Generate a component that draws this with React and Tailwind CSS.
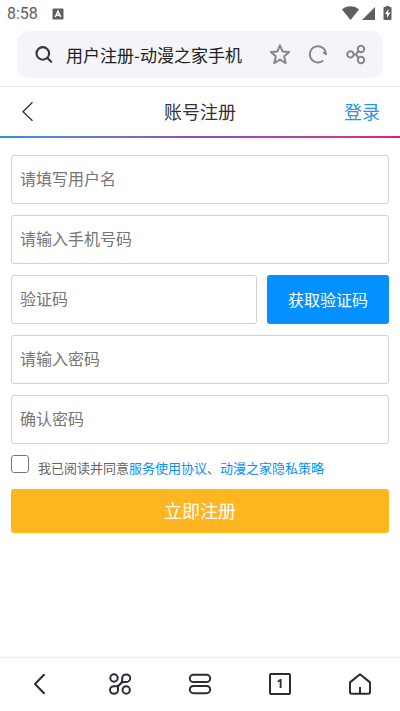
/*
DESCRIPTION: Mobile browser view with the account registration page.
- Status bar and address bar on top
- Registration form in the middle
- Browser toolbar at the bottom
*/

import { useState } from 'react'

const FIELD_CLASS =
  'block h-[49px] w-full min-w-0 rounded-[3px] border border-[#d2d2d2] bg-white px-2 pb-1 text-base text-[#333] outline-none placeholder:text-[#757575]'

function StatusBar() {
  return (
    <div className="flex h-7 items-center justify-between pr-2 pl-[7px] text-[#5f5f5f]">
      <div className="flex items-center gap-[14px]">
        <span className="font-[Roboto,sans-serif] text-base leading-7">8:58</span>
        <svg className="h-3 w-3" viewBox="0 0 12 12">
          <rect x="0.5" y="0.5" width="11" height="11" rx="1" fill="#5f5f5f" />
          <path d="M3.3 9 6 3.2 8.7 9M4.3 7.2h3.4" fill="none" stroke="#fff" strokeWidth="1.4" />
        </svg>
      </div>
      <svg className="h-4 w-[50px]" viewBox="0 0 50 16" fill="currentColor">
        <path d="M0 3.4C4.8-.7 12.2-.7 17 3.4L8.5 14Z" />
        <path d="M33 1v13H20Z" />
        <path d="M43.8 1V-.4h3.4V1h1.3q1 0 1 1v11q0 1-1 1h-6q-1 0-1-1V2q0-1 1-1Z" />
        <path d="m46.4 3-3.4 5h2.1v4l3.1-5.2h-2Z" fill="#fff" />
      </svg>
    </div>
  )
}

function AddressBar() {
  return (
    <div className="border-b border-[#ebebeb] px-[17px] pt-[3px] pb-2">
      <div className="flex h-[47px] items-center rounded-xl bg-[#f3f5f8] pr-4 pl-[18px]">
        <svg className="h-[18px] w-[18px] shrink-0" viewBox="0 0 18 18" fill="none" stroke="#34363b" strokeWidth="2.1">
          <circle cx="7.8" cy="7.4" r="6.3" />
          <path d="m12.4 12 3.8 3.8" strokeLinecap="round" />
        </svg>
        <span className="ml-[13px] flex-1 truncate text-[17px] text-[#202124]">用户注册-动漫之家手机</span>
        <div className="flex shrink-0 gap-4 text-[#82868e]">
          <button type="button" aria-label="收藏">
            <svg className="h-[22px] w-[22px]" viewBox="0 0 22 22" fill="none" stroke="currentColor" strokeWidth="2" strokeLinejoin="round">
              <path d="m11 1.4 2.6 6 6.5.6-4.9 4.3 1.5 6.8-5.7-3.6-5.7 3.6 1.5-6.8L1.9 8l6.5-.6Z" />
            </svg>
          </button>
          <button type="button" aria-label="刷新">
            <svg className="h-[22px] w-[22px]" viewBox="0 0 22 22" fill="none" stroke="currentColor" strokeWidth="1.9" strokeLinecap="round" strokeLinejoin="round">
              <path d="M15.6 16.9A8.1 8.1 0 1 1 19 10.3l-2.4-1.6" />
            </svg>
          </button>
          <button type="button" aria-label="分享">
            <svg className="h-[22px] w-[22px]" viewBox="0 0 22 22" fill="none" stroke="currentColor" strokeWidth="2">
              <circle cx="5.4" cy="10.4" r="3.2" />
              <circle cx="16" cy="5" r="3.2" />
              <circle cx="16" cy="16" r="3.2" />
              <path d="M8.6 10.4h1.6q1.2 0 1.6-1.2l1.6-2.6M10.2 10.4q1.2 0 1.6 1.2l1.6 2.8" />
            </svg>
          </button>
        </div>
      </div>
    </div>
  )
}

function PageHeader() {
  return (
    <header>
      <div className="grid h-[49px] grid-cols-3 items-center px-5 pb-[2px] text-lg">
        <button type="button" aria-label="返回" className="justify-self-start">
          <svg className="h-5 w-[14px]" viewBox="0 0 14 20" fill="none" stroke="#333" strokeWidth="1.3">
            <path d="M12.5 1.3 3 10.8l9.5 9" />
          </svg>
        </button>
        <h1 className="text-center text-[#333]">账号注册</h1>
        <a href="#login" className="justify-self-end text-[#2b93e6]">登录</a>
      </div>
      <div className="h-[2px] bg-linear-to-r from-[#2196e3] via-[#8a4bc4] to-[#e6148c]" />
    </header>
  )
}

function RegisterForm() {
  const [agreed, setAgreed] = useState(false)

  return (
    <form className="flex flex-col gap-[11px] px-[11px] pt-[17px]" onSubmit={(e) => e.preventDefault()}>
      <input className={FIELD_CLASS} type="text" placeholder="请填写用户名" aria-label="用户名" />
      <input className={FIELD_CLASS} type="tel" placeholder="请输入手机号码" aria-label="手机号码" />
      <div className="flex gap-[10px]">
        <input className={FIELD_CLASS} type="text" placeholder="验证码" aria-label="验证码" />
        <button type="button" className="h-[49px] w-[122px] shrink-0 rounded-[3px] bg-[#0590ff] pb-[2px] text-base text-white">
          获取验证码
        </button>
      </div>
      <input className={FIELD_CLASS} type="password" placeholder="请输入密码" aria-label="密码" />
      <input className={FIELD_CLASS} type="password" placeholder="确认密码" aria-label="确认密码" />

      {/* Terms */}
      <div className="flex h-[23px] items-start gap-[9px] text-[13px] text-[#666]">
        <input
          id="agree"
          type="checkbox"
          checked={agreed}
          onChange={(e) => setAgreed(e.target.checked)}
          className="h-[18px] w-[18px] shrink-0 appearance-none rounded-[3px] border border-[#767676] bg-white checked:bg-[#0590ff]"
        />
        <div className="pt-[3px] leading-5 whitespace-nowrap">
          <label htmlFor="agree">我已阅读并同意</label>
          <a href="#terms" className="text-[#0590ff]">服务使用协议</a>、
          <a href="#privacy" className="text-[#0590ff]">动漫之家隐私策略</a>
        </div>
      </div>

      <button type="submit" className="h-11 rounded-[3px] bg-[#ffb621] pb-[2px] text-lg text-white">
        立即注册
      </button>
    </form>
  )
}

function BottomBar() {
  return (
    <nav className="mt-auto grid h-[54px] grid-cols-5 items-center justify-items-center border-t border-[#ececec] pb-[2px] text-[#2a2d33]">
      <button type="button" aria-label="后退">
        <svg className="h-6 w-6" viewBox="0 0 24 24" fill="none" stroke="currentColor" strokeWidth="2" strokeLinecap="round" strokeLinejoin="round">
          <path d="M16 2.8 7 12l9 9.2" />
        </svg>
      </button>
      <button type="button" aria-label="工具">
        <svg className="h-6 w-6" viewBox="0 0 24 24" fill="none" stroke="currentColor" strokeWidth="2">
          <circle cx="6" cy="6" r="3.7" />
          <circle cx="18.2" cy="18" r="3.7" />
          <path d="M14.2 6.2a4 3.8 0 1 1 4 3.8h-2.4C13.4 10 10 13.6 10 15.6V18a4 3.8 0 1 1-4-3.8h2.4C10.8 14.2 14.2 10.8 14.2 8.6Z" />
        </svg>
      </button>
      <button type="button" aria-label="菜单">
        <svg className="h-6 w-6" viewBox="0 0 24 24" fill="none" stroke="currentColor" strokeWidth="2">
          <rect x="1.8" y="2.8" width="20.4" height="7.2" rx="3.6" />
          <rect x="1.8" y="14" width="20.4" height="7.2" rx="3.6" />
        </svg>
      </button>
      <button
        type="button"
        aria-label="标签页"
        className="flex h-[22px] w-[22px] items-center justify-center rounded-[2px] border-2 border-current font-['Noto_Sans',sans-serif] text-xs leading-none font-bold"
      >
        1
      </button>
      <button type="button" aria-label="主页">
        <svg className="h-6 w-6" viewBox="0 0 24 24" fill="none" stroke="currentColor" strokeWidth="2" strokeLinejoin="round">
          <path d="M12 2.3 22 10.4V20q0 1.7-1.7 1.7H3.7Q2 21.7 2 20v-9.6Z" />
          <path d="M12 15v6" />
        </svg>
      </button>
    </nav>
  )
}

export default function App() {
  return (
    <div className="flex min-h-screen flex-col bg-white font-['Noto_Sans_CJK_SC',sans-serif]">
      <StatusBar />
      <AddressBar />
      <PageHeader />
      <RegisterForm />
      <BottomBar />
    </div>
  )
}
